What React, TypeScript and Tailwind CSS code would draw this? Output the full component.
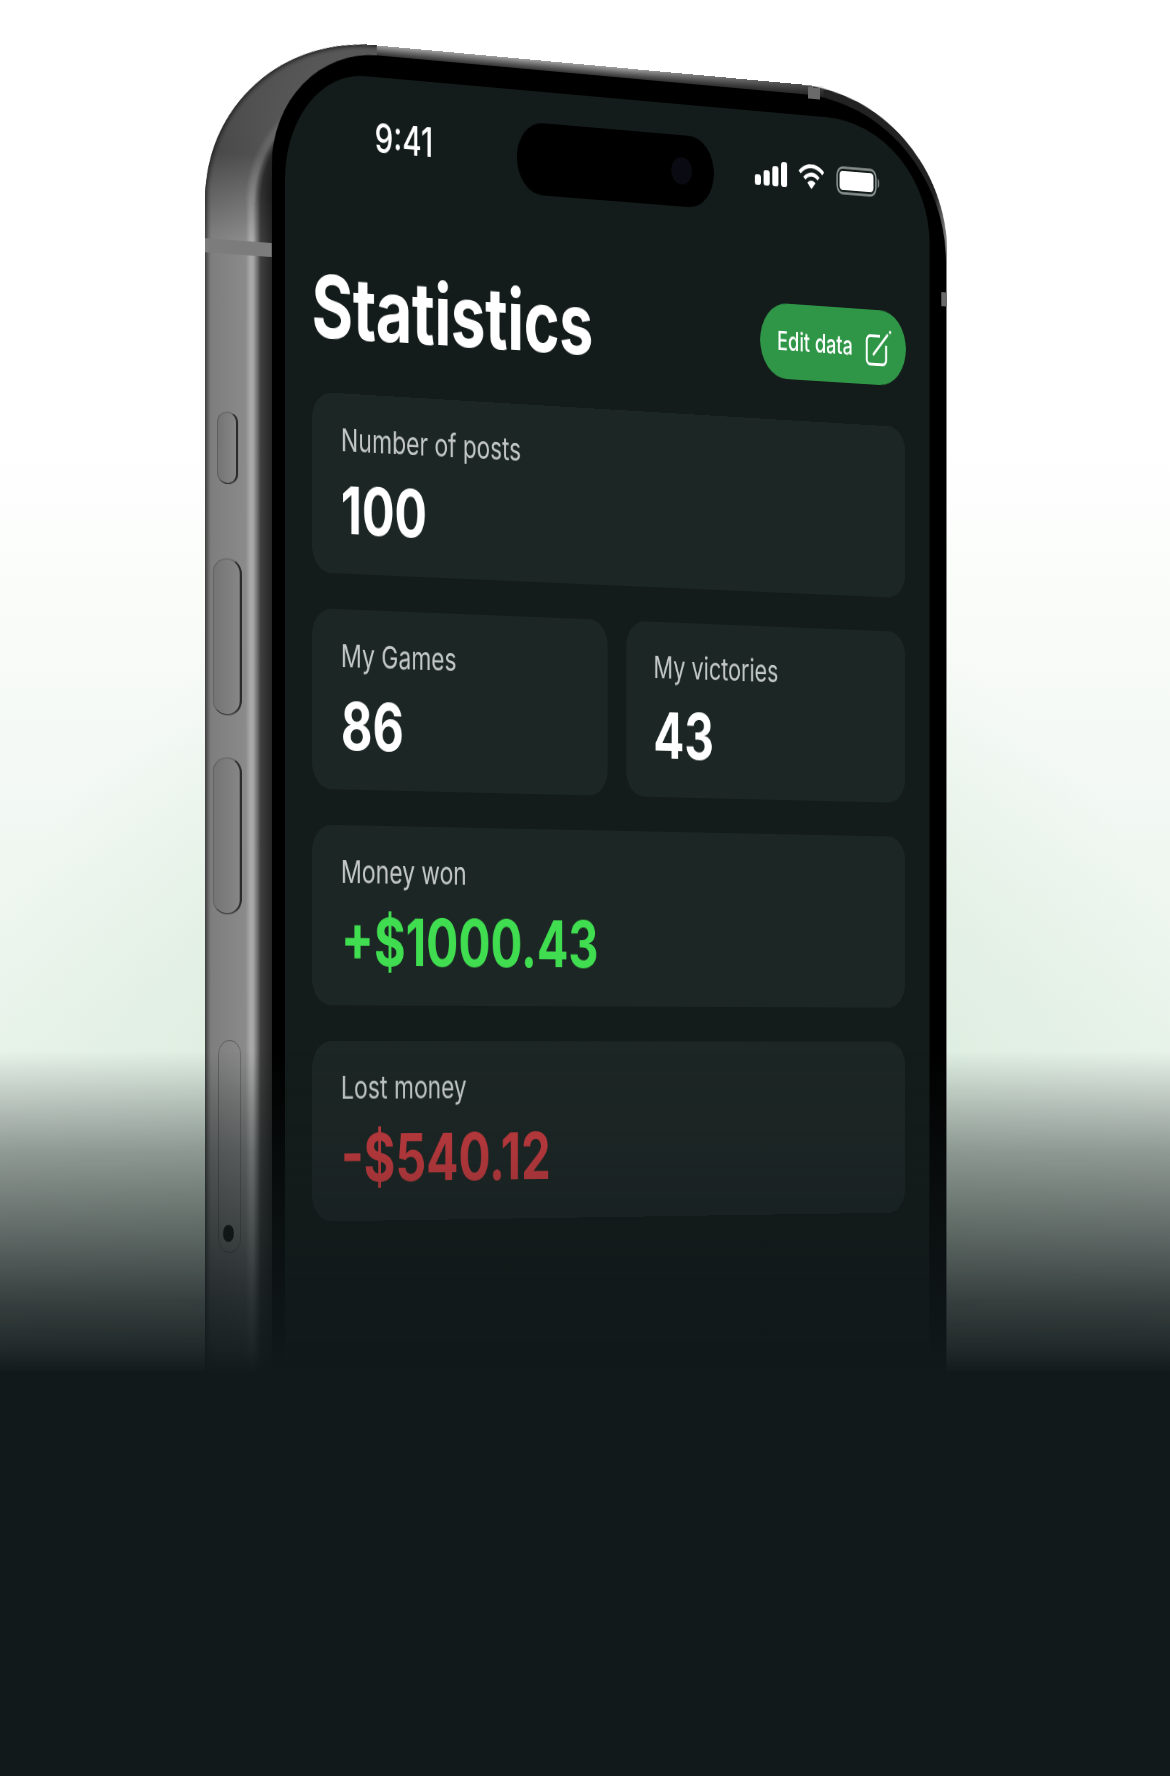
function Card({ label, value, tone, grow }: { label: string; value: string; tone: string; grow?: boolean }) {
  return (
    <div className={`h-[181px] rounded-[26px] bg-[#1c2625] pl-[39px] pt-[27px] ${grow ? "flex-1" : ""}`}>
      <div className="text-[31.6px] leading-[40px] font-normal text-[#c3c8c6]">{label}</div>
      <div className={`mt-[14px] text-[66.5px] leading-[72px] font-bold whitespace-nowrap ${tone}`}>{value}</div>
    </div>
  );
}

function Signal() {
  return (
    <svg width="48" height="26" viewBox="0 0 48 26" fill="#fff">
      <rect x="0" y="15" width="9" height="11" rx="3" />
      <rect x="13" y="10" width="9" height="16" rx="3" />
      <rect x="26" y="5" width="9" height="21" rx="3" />
      <rect x="39" y="0" width="9" height="26" rx="3" />
    </svg>
  );
}

function Wifi() {
  return (
    <svg width="40" height="26" viewBox="0 0 40 26" fill="none" stroke="#fff" strokeWidth="4.2">
      <path d="M2.5 9 A25 25 0 0 1 37.5 9" />
      <path d="M9.5 15 A15 15 0 0 1 30.5 15" />
      <path d="M14 19.5 A8.5 8.5 0 0 1 26 19.5 L20 26 Z" fill="#fff" stroke="none" />
    </svg>
  );
}

function Battery() {
  return (
    <svg width="66" height="30" viewBox="0 0 66 30" fill="none">
      <rect x="1.5" y="1.5" width="58" height="27" rx="8" stroke="#8a9290" strokeWidth="2.4" />
      <rect x="5" y="5" width="51" height="20" rx="4.5" fill="#fff" />
      <path d="M62.5 10 C65 11 65.5 19 62.5 20 Z" fill="#7d8583" />
    </svg>
  );
}

function EditIcon() {
  return (
    <svg width="42" height="38" viewBox="0 0 40 38" fill="none" stroke="#fff" strokeWidth="3">
      <path d="M22 6.5 H7 a5 5 0 0 0 -5 5 V31.5 a5 5 0 0 0 5 5 H26 a5 5 0 0 0 5 -5 V16" />
      <path d="M12 26 L33 5" strokeLinecap="round" />
      <circle cx="37" cy="1.8" r="1.8" fill="#fff" stroke="none" />
    </svg>
  );
}

function SideButton({ cls }: { cls: string }) {
  return (
    <div
      className={`absolute rounded-[20px/15px] border border-l-[#585858] border-t-[#666666] border-r-[3px] border-r-[#2b2b2b] border-b-[#333333] bg-[linear-gradient(to_right,#747474,#868686)] ${cls}`}
    />
  );
}

export default function App() {
  return (
    <div
      className="relative h-[1776px] w-[1170px] overflow-hidden pl-[178px] pt-[37px] [background:radial-gradient(ellipse_640px_640px_at_585px_1180px,#cfe6d6_0%,#dcecdf_45%,rgba(232,243,234,0)_100%),linear-gradient(to_bottom,#ffffff_0px,#ffffff_430px,#f6faf6_700px,#e8f3ea_1060px,#e8f3ea_1776px)]"
      style={{ fontFamily: "Inter, 'Noto Sans', sans-serif" }}
    >
      {/* phone, drawn flat then put in perspective */}
      <div className="relative h-[1500px] w-[1059px] origin-[107px_968px] pl-[89px] pr-[2px] pt-[10px] [border-top-left-radius:232px_168px] [border-top-right-radius:222px_165px] [transform:matrix3d(0.74,0.0032,0,0.000067,0,1,0,0,0,0,1,0,0,0,0,1)] [background:linear-gradient(to_right,#3f3f3f_0px,#6e6e6e_5px,#7e7e7e_8px,#8a8a8a_54px,#a8a8a8_60px,#a8a8a8_64px,#6c6c6c_70px,#3f3f3f_74px,#262626_89px,#222222_1040px,#8a8a8a_1059px)]">
        {/* metal wrapping the top-left corner */}
        <div className="absolute left-0 top-0 h-[168px] w-[232px] rounded-tl-[232px_168px] [background:radial-gradient(ellipse_232px_168px_at_100%_100%,#262626_62%,#3f3f3f_68%,#6c6c6c_70%,#a8a8a8_72%,#a8a8a8_74%,#8a8a8a_77%,#7e7e7e_96.5%,#6e6e6e_98%,#3f3f3f_100%)]" />
        {/* top edge */}
        <div className="absolute left-[232px] top-0 h-[11px] w-[640px] [mask-image:linear-gradient(to_right,#000,#000_55%,rgba(0,0,0,0.25))] bg-[linear-gradient(to_bottom,#a0a0a0,#555555_60%,#2a2a2a)]" />
        {/* shade on the metal above the band */}
        <div className="absolute left-0 top-0 h-[205px] w-[232px] rounded-tl-[232px_168px] bg-[linear-gradient(to_bottom,rgba(0,0,0,0.3)_0px,rgba(0,0,0,0.42)_120px,rgba(0,0,0,0)_205px)]" />
        {/* antenna band and top notch */}
        <div className="absolute left-0 top-[207px] h-[14px] w-[89px] bg-[#7c7c7c]" />
        {/* side controls */}
        <SideButton cls="left-[16px] top-[378px] h-[72px] w-[28px]" />
        <SideButton cls="left-[10px] top-[524px] h-[156px] w-[39px]" />
        <SideButton cls="left-[10px] top-[722px] h-[156px] w-[39px]" />
        <div className="absolute left-[17px] top-[1003px] h-[212px] w-[31px] rounded-[15px] border border-[#5c5c5c]" />
        <div className="absolute left-[24px] top-[1187px] h-[17px] w-[14px] rounded-full bg-[#111111]" />

        {/* black bezel */}
        <div className="relative h-[1490px] bg-black pl-[18px] pr-[25px] pt-[22px] [border-top-right-radius:215px_165px] [border-top-left-radius:145px_120px]">
          {/* screen */}
          <div className="h-full rounded-tl-[110px] bg-[#131c1a] text-white [border-top-right-radius:155px_125px]">
            {/* status bar */}
            <div className="flex h-[106px] items-center pl-[122px] pt-[32px]">
              <div className="w-[198px] pb-[16px] text-[41px] font-medium leading-[48px]">9:41</div>
              <div className="flex h-[74px] w-[283px] items-center justify-end rounded-[37px] bg-black pr-[32px]">
                <div className="h-[28px] w-[30px] rounded-full bg-[#0a0a12]" />
              </div>
              <div className="ml-[60px] pb-[10px]">
                <Signal />
              </div>
              <div className="ml-[16px] pb-[10px]">
                <Wifi />
              </div>
              <div className="ml-[17px] pb-[8px]">
                <Battery />
              </div>
            </div>

            {/* header */}
            <div className="mt-[93px] flex h-[79px] items-center justify-between pl-[36px] pr-[36px]">
              <div className="pb-[7px] text-[86.5px] font-bold leading-none tracking-[-0.5px]">Statistics</div>
              <div className="flex h-[79px] w-[218px] items-center justify-between rounded-full bg-[#2e9646] pl-[25px] pr-[20px]">
                <span className="whitespace-nowrap text-[27px] font-medium leading-none">Edit data</span>
                <EditIcon />
              </div>
            </div>

            {/* cards */}
            <div className="mt-[43px] flex flex-col gap-[36px] pl-[37px] pr-[37px]">
              <Card label="Number of posts" value="100" tone="text-white" />
              <div className="flex gap-[27px]">
                <Card label="My Games" value="86" tone="text-white" grow />
                <Card label="My victories" value="43" tone="text-white" grow />
              </div>
              <Card label="Money won" value="+$1000.43" tone="text-[#3fdd4f]" />
              <Card label="Lost money" value="-$540.12" tone="text-[#c03a3e]" />
            </div>
          </div>
        </div>
        {/* pieces of the antenna band that show at the edges */}
        <div className="absolute right-0 top-[207px] h-[15px] w-[9px] bg-[#6a6a6a]" />
        <div className="absolute left-[849px] top-[2px] h-[12px] w-[18px] bg-[#6a6a6a]" />
      </div>

      {/* dark fade over the lower part of the page; the screen fades later */}
      <div className="pointer-events-none absolute left-0 top-[1052px] flex h-[724px] w-full">
        <div className="h-full w-[285px] [background:linear-gradient(to_bottom,rgba(17,25,26,0)_0px,rgba(17,25,26,0.2)_48px,rgba(17,25,26,0.4)_98px,rgba(17,25,26,0.54)_148px,rgba(17,25,26,0.68)_198px,rgba(17,25,26,0.82)_248px,rgba(17,25,26,0.93)_298px,#11191a_321px,#11191a_724px)]" />
        <div className="h-full w-[645px] [background:linear-gradient(to_bottom,rgba(17,25,26,0)_0px,rgba(17,25,26,0.1)_100px,rgba(17,25,26,0.3)_180px,rgba(17,25,26,0.8)_260px,#11191a_321px,#11191a_724px)]" />
        <div className="h-full flex-1 [background:linear-gradient(to_bottom,rgba(17,25,26,0)_0px,rgba(17,25,26,0.2)_48px,rgba(17,25,26,0.4)_98px,rgba(17,25,26,0.54)_148px,rgba(17,25,26,0.68)_198px,rgba(17,25,26,0.82)_248px,rgba(17,25,26,0.93)_298px,#11191a_321px,#11191a_724px)]" />
      </div>
    </div>
  );
}
